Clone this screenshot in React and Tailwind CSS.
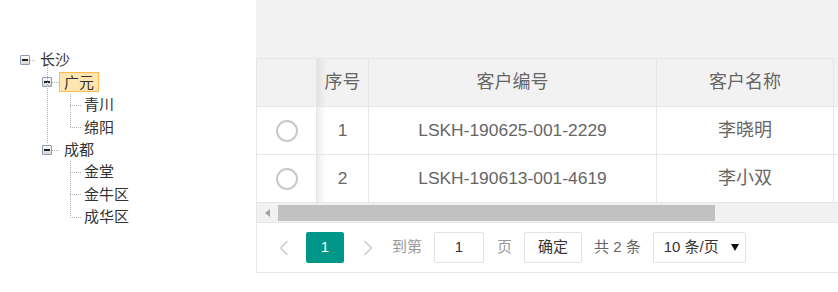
const font = { fontFamily: '"Liberation Sans", "Noto Sans CJK SC", sans-serif' }

function MinusIcon() {
  return (
    <span className="flex h-[10px] w-[10px] items-center justify-center rounded-[1px] border border-[#8a9bb0] bg-[linear-gradient(to_bottom,#ffffff,#d6d6d6)]">
      <span className="h-[2px] w-[6px] bg-[#222]" />
    </span>
  )
}

function TreeRow({ level, label, selected, open }) {
  const pad = level === 1 ? 'pl-[20px]' : level === 2 ? 'pl-[42px]' : 'pl-[79px]'
  return (
    <div className={`flex h-[22.4px] items-center ${pad}`}>
      {open && <MinusIcon />}
      {open && <span className={level === 1 ? 'w-[5px]' : 'w-[7px]'} />}
      <span
        className={`flex h-[20px] items-center border px-[4px] text-[15px] leading-none text-[#333] ${
          selected ? 'border-[#ffb951] bg-[#ffe6b0]' : 'border-transparent'
        }`}
      >
        {label}
      </span>
    </div>
  )
}

function TreeLines() {
  const dot = { stroke: '#b5b5b5', strokeWidth: 1, strokeDasharray: '1 1' }
  return (
    <svg className="pointer-events-none absolute left-0 top-0" width="256" height="292">
      <line x1="30" y1="60.5" x2="35" y2="60.5" {...dot} />
      <line x1="47.5" y1="66" x2="47.5" y2="144" {...dot} />
      <line x1="52" y1="82.5" x2="59" y2="82.5" {...dot} />
      <line x1="52" y1="150.5" x2="59" y2="150.5" {...dot} />
      <line x1="70.5" y1="94" x2="70.5" y2="128" {...dot} />
      <line x1="70" y1="105.5" x2="81" y2="105.5" {...dot} />
      <line x1="70" y1="127.5" x2="81" y2="127.5" {...dot} />
      <line x1="70.5" y1="161" x2="70.5" y2="218" {...dot} />
      <line x1="70" y1="172.5" x2="81" y2="172.5" {...dot} />
      <line x1="70" y1="194.5" x2="81" y2="194.5" {...dot} />
      <line x1="70" y1="217.5" x2="81" y2="217.5" {...dot} />
    </svg>
  )
}

const rows = [
  { no: 1, code: 'LSKH-190625-001-2229', name: '李晓明' },
  { no: 2, code: 'LSKH-190613-001-4619', name: '李小双' },
]

const shadow = 'bg-[linear-gradient(to_right,rgba(0,0,0,0.07),rgba(0,0,0,0)_9px)]'

function Chevron({ dir }) {
  return (
    <svg width="10" height="16" viewBox="0 0 10 16">
      <polyline
        points={dir === 'left' ? '8.5,1 1.5,8 8.5,15' : '1.5,1 8.5,8 1.5,15'}
        fill="none"
        stroke="#c9c9c9"
        strokeWidth="1.4"
      />
    </svg>
  )
}

export default function App() {
  return (
    <div className="flex h-[292px] w-[838px] overflow-hidden bg-white" style={font}>
      <div className="relative w-[256px] shrink-0 pt-[48.8px]">
        <TreeLines />
        <TreeRow level={1} label="长沙" open />
        <TreeRow level={2} label="广元" open selected />
        <TreeRow level={3} label="青川" />
        <TreeRow level={3} label="绵阳" />
        <TreeRow level={2} label="成都" open />
        <TreeRow level={3} label="金堂" />
        <TreeRow level={3} label="金牛区" />
        <TreeRow level={3} label="成华区" />
      </div>

      <div className="flex min-w-0 flex-1 flex-col">
        <div className="h-[59px] border-b border-[#e6e6e6] bg-[#f2f2f2]" />
        <div className="border-l border-[#e6e6e6]">
          <div className="flex h-[48px] border-b border-[#e6e6e6] bg-[#f2f2f2] text-[18px] text-[#666]">
            <div className="w-[60px] shrink-0 border-r border-[#e6e6e6]" />
            <div className={`flex w-[52px] shrink-0 items-center justify-center border-r border-[#e6e6e6] ${shadow}`}>序号</div>
            <div className="flex w-[288px] shrink-0 items-center justify-center border-r border-[#e6e6e6]">客户编号</div>
            <div className="flex w-[177px] shrink-0 items-center justify-center border-r border-[#e6e6e6]">客户名称</div>
            <div className="flex-1" />
          </div>
          {rows.map((r) => (
            <div key={r.no} className="flex h-[48px] border-b border-[#e6e6e6] text-[#666]">
              <div className="flex w-[60px] shrink-0 items-center justify-center border-r border-[#e6e6e6]">
                <span className="h-[22px] w-[22px] rounded-full border-2 border-[#c9c9c9]" />
              </div>
              <div className={`flex w-[52px] shrink-0 items-center justify-center border-r border-[#e6e6e6] text-[17.4px] ${shadow}`}>
                {r.no}
              </div>
              <div className="flex w-[288px] shrink-0 items-center justify-center border-r border-[#e6e6e6] text-[17.4px]">
                {r.code}
              </div>
              <div className="flex w-[177px] shrink-0 items-center justify-center border-r border-[#e6e6e6] text-[18px]">
                {r.name}
              </div>
              <div className="flex-1" />
            </div>
          ))}
          <div className="flex h-[20px] items-center border-b border-[#e6e6e6] bg-[#f1f1f1]">
            <div className="flex w-[21px] justify-center">
              <svg width="6" height="8" viewBox="0 0 6 8">
                <polygon points="5,0 5,8 0,4" fill="#a3a3a3" />
              </svg>
            </div>
            <div className="h-[16px] w-[437px] bg-[#c1c1c1]" />
          </div>
          <div className="flex h-[50px] items-center border-b border-[#e6e6e6] pl-[22px] text-[15px]">
            <Chevron dir="left" />
            <div className="ml-[17px] flex h-[31px] w-[38px] items-center justify-center rounded-[2px] bg-[#009688] text-white">1</div>
            <div className="ml-[19px]">
              <Chevron dir="right" />
            </div>
            <span className="ml-[19px] text-[#999]">到第</span>
            <div className="ml-[12px] flex h-[31px] w-[50px] items-center justify-center rounded-[2px] border border-[#e2e2e2] text-[#333]">1</div>
            <span className="ml-[13px] text-[#999]">页</span>
            <div className="ml-[12px] flex h-[31px] w-[58px] items-center justify-center rounded-[2px] border border-[#e2e2e2] text-[#333]">确定</div>
            <span className="ml-[12px] text-[#666]">共 2 条</span>
            <div className="ml-[12px] flex h-[31px] w-[93px] items-center rounded-[2px] border border-[#e2e2e2] pl-[10px] text-[#333]">
              <span>10 条/页</span>
              <svg className="ml-[12px]" width="8" height="7" viewBox="0 0 8 7">
                <polygon points="0,0 8,0 4,7" fill="#111" />
              </svg>
            </div>
          </div>
        </div>
      </div>
    </div>
  )
}
